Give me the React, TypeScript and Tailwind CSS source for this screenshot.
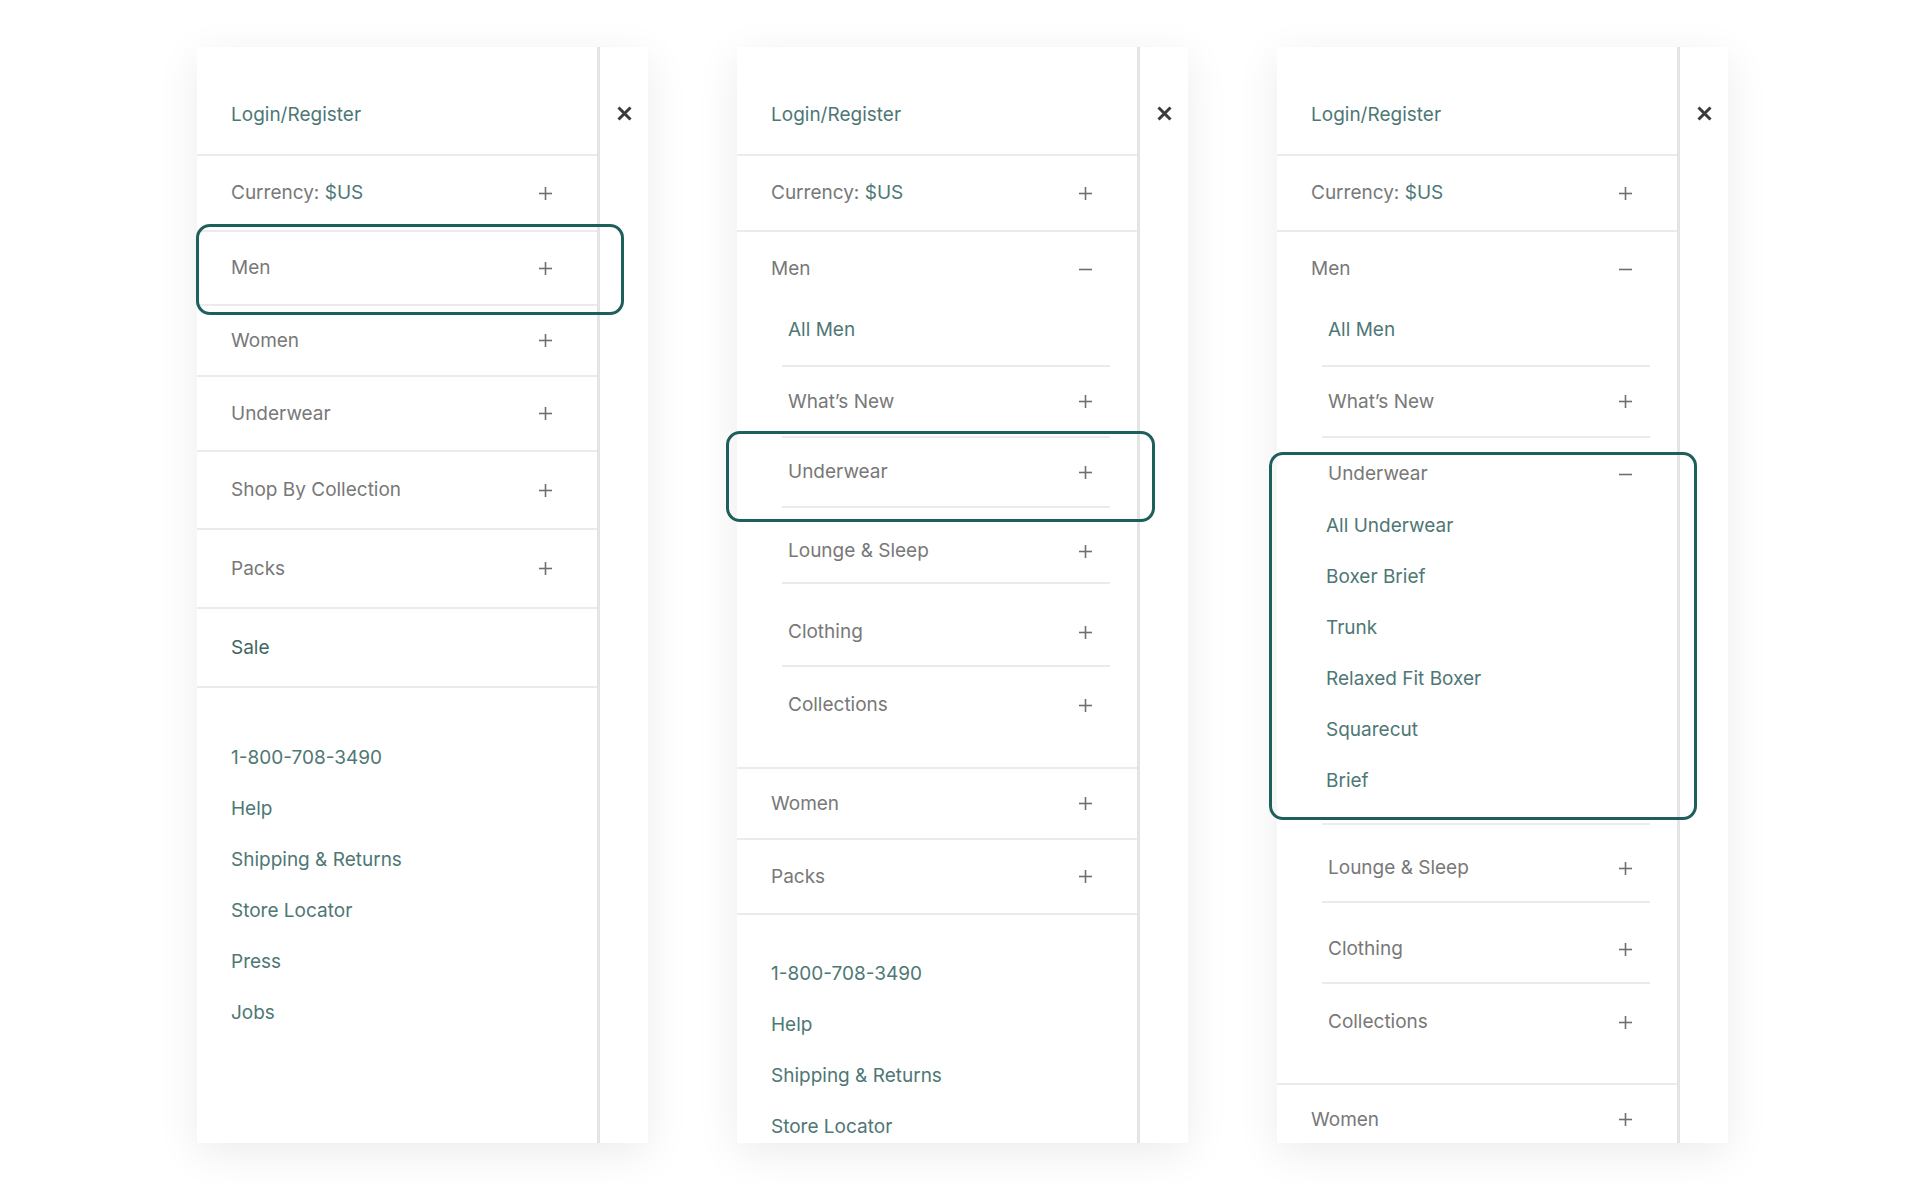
import type { ReactNode } from 'react'

// Toggle glyph for accordion rows: a plus when closed, a dash when open.
function Toggle({ open }: { open: boolean }) {
  return (
    <svg width="13" height="13" viewBox="0 0 13 13" className="shrink-0 text-[#6e6e6e]" aria-hidden>
      <path d="M0 6.5h13" stroke="currentColor" strokeWidth="1.6" />
      {!open && <path d="M6.5 0v13" stroke="currentColor" strokeWidth="1.6" />}
    </svg>
  )
}

function CloseIcon() {
  return (
    <svg width="15" height="15" viewBox="0 0 15 15" className="text-[#3b3b3b]" aria-hidden>
      <path d="M1.5 1.5l12 12M13.5 1.5l-12 12" stroke="currentColor" strokeWidth="3" />
    </svg>
  )
}

function Row({
  children,
  toggle,
  className = '',
}: {
  children: ReactNode
  toggle?: 'plus' | 'minus'
  className?: string
}) {
  return (
    <div className={`flex items-center justify-between ${className}`}>
      <span className="leading-6">{children}</span>
      {toggle && <Toggle open={toggle === 'minus'} />}
    </div>
  )
}

/** Slide-out drawer: menu column, a close strip, and a call-out ring. */
function Drawer({ children, ring }: { children: ReactNode; ring: string }) {
  return (
    <div className="relative flex h-[1096px] w-[451px] shrink-0 bg-white shadow-[0_10px_40px_rgba(0,0,0,0.08)]">
      <nav className="h-full w-[403px] overflow-hidden border-r-[3px] border-[#e4e4e4] pt-[28px] text-[19px] text-[#787878]">
        {children}
      </nav>
      <div className="flex flex-1 justify-center pt-[59px]">
        <CloseIcon />
      </div>
      <div className={`pointer-events-none absolute rounded-[14px] border-[3px] border-[#1f5f5b] ${ring}`} />
    </div>
  )
}

function AccountRows() {
  return (
    <>
      <Row className="h-[81px] border-b-2 border-[#ebebeb] pl-[34px] pr-[45px] text-[#4e7775]">Login/Register</Row>
      <Row toggle="plus" className="h-[76px] border-b-2 border-[#ebebeb] pl-[34px] pr-[45px]">
        Currency: <span className="text-[#4e7775]">$US</span>
      </Row>
    </>
  )
}

const footerLinks = ['1-800-708-3490', 'Help', 'Shipping & Returns', 'Store Locator', 'Press', 'Jobs']

function FooterLinks({ className, count = footerLinks.length }: { className: string; count?: number }) {
  return (
    <ul className={`pl-[34px] text-[#4e7775] ${className}`}>
      {footerLinks.slice(0, count).map((l) => (
        <li key={l} className="flex h-[51px] items-center leading-6">
          {l}
        </li>
      ))}
    </ul>
  )
}

const underwearLinks = ['All Underwear', 'Boxer Brief', 'Trunk', 'Relaxed Fit Boxer', 'Squarecut', 'Brief']

export default function App() {
  return (
    <div className="flex h-[1184px] w-full gap-[89px] overflow-hidden bg-white pl-[197px] pt-[47px] font-[Inter,sans-serif]">
      {/* Collapsed menu */}
      <Drawer ring="left-[-1px] top-[177px] h-[91px] w-[428px]">
        <AccountRows />
        <Row toggle="plus" className="h-[74px] border-b-2 border-[#ebebeb] pl-[34px] pr-[45px]">Men</Row>
        <Row toggle="plus" className="h-[71px] border-b-2 border-[#ebebeb] pl-[34px] pr-[45px]">Women</Row>
        <Row toggle="plus" className="h-[75px] border-b-2 border-[#ebebeb] pl-[34px] pr-[45px]">Underwear</Row>
        <Row toggle="plus" className="h-[78px] border-b-2 border-[#ebebeb] pl-[34px] pr-[45px]">Shop By Collection</Row>
        <Row toggle="plus" className="h-[79px] border-b-2 border-[#ebebeb] pl-[34px] pr-[45px]">Packs</Row>
        <Row className="h-[79px] border-b-2 border-[#ebebeb] pl-[34px] pr-[45px] text-[#3f6664]">Sale</Row>
        <FooterLinks className="pt-[44px]" />
      </Drawer>

      {/* Men expanded */}
      <Drawer ring="left-[-11px] top-[384px] h-[91px] w-[429px]">
        <AccountRows />
        <div className="border-b-2 border-[#ebebeb] pb-[24px]">
          <Row toggle="minus" className="h-[74px] pl-[34px] pr-[45px]">Men</Row>
          <div className="ml-[45px] mr-[27px]">
            <Row className="h-[61px] border-b-2 border-[#ebebeb] pb-3 pl-[6px] pr-[18px] text-[#4e7775]">All Men</Row>
            <Row toggle="plus" className="h-[71px] border-b-2 border-[#ebebeb] pl-[6px] pr-[18px]">What’s New</Row>
            <Row toggle="plus" className="h-[70px] border-b-2 border-[#ebebeb] pl-[6px] pr-[18px]">Underwear</Row>
            <Row toggle="plus" className="h-[76px] border-b-2 border-[#ebebeb] pt-3 pl-[6px] pr-[18px]">Lounge &amp; Sleep</Row>
            <Row toggle="plus" className="h-[83px] border-b-2 border-[#ebebeb] pt-[15px] pl-[6px] pr-[18px]">Clothing</Row>
            <Row toggle="plus" className="h-[76px] pl-[6px] pr-[18px]">Collections</Row>
          </div>
        </div>
        <Row toggle="plus" className="h-[71px] border-b-2 border-[#ebebeb] pl-[34px] pr-[45px]">Women</Row>
        <Row toggle="plus" className="h-[75px] border-b-2 border-[#ebebeb] pl-[34px] pr-[45px]">Packs</Row>
        <FooterLinks className="pt-[33px]" count={4} />
      </Drawer>

      {/* Men > Underwear expanded */}
      <Drawer ring="left-[-8px] top-[405px] h-[368px] w-[428px]">
        <AccountRows />
        <div className="border-b-2 border-[#ebebeb] pb-[23px]">
          <Row toggle="minus" className="h-[74px] pl-[34px] pr-[45px]">Men</Row>
          <div className="ml-[45px] mr-[27px]">
            <Row className="h-[61px] border-b-2 border-[#ebebeb] pb-3 pl-[6px] pr-[18px] text-[#4e7775]">All Men</Row>
            <Row toggle="plus" className="h-[71px] border-b-2 border-[#ebebeb] pl-[6px] pr-[18px]">What’s New</Row>
            <div className="border-b-2 border-[#ebebeb] pb-[17px]">
              <Row toggle="minus" className="h-[62px] pt-[10px] pl-[6px] pr-[18px]">Underwear</Row>
              <ul className="pl-[4px] text-[#4e7775]">
                {underwearLinks.map((l) => (
                  <li key={l} className="flex h-[51px] items-center leading-6">
                    {l}
                  </li>
                ))}
              </ul>
            </div>
            <Row toggle="plus" className="h-[78px] border-b-2 border-[#ebebeb] pt-[10px] pl-[6px] pr-[18px]">Lounge &amp; Sleep</Row>
            <Row toggle="plus" className="h-[81px] border-b-2 border-[#ebebeb] pt-[13px] pl-[6px] pr-[18px]">Clothing</Row>
            <Row toggle="plus" className="h-[76px] pl-[6px] pr-[18px]">Collections</Row>
          </div>
        </div>
        <Row toggle="plus" className="h-[71px] border-b-2 border-[#ebebeb] pl-[34px] pr-[45px]">Women</Row>
      </Drawer>
    </div>
  )
}
